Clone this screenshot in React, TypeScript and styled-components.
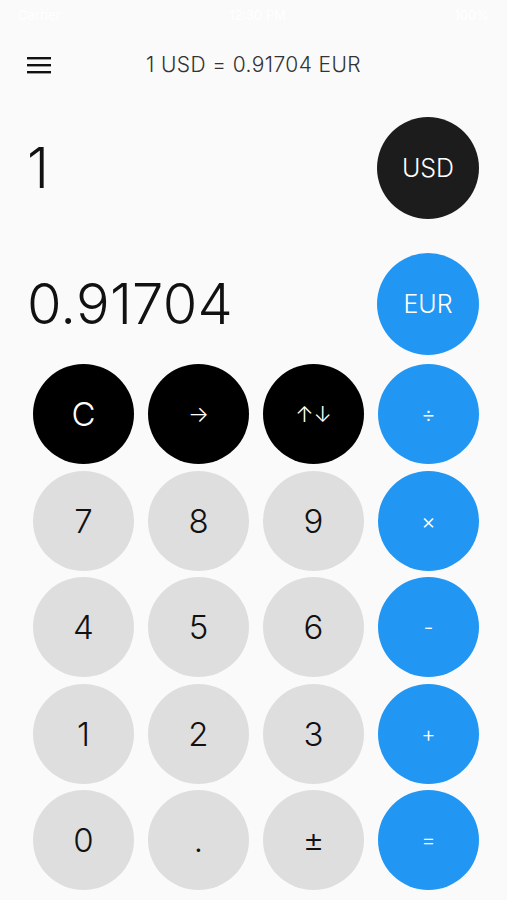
import * as React from "react";
import styled, { createGlobalStyle } from "styled-components";

const GlobalStyle = createGlobalStyle`
  html, body {
    margin: 0;
    padding: 0;
    background: #fafafa;
  }
  body {
    font-family: Inter, "Noto Sans", "Liberation Sans", sans-serif;
    color: #111;
  }
`;

type Tone = "grey" | "black" | "blue";

const keys: { label: string; tone: Tone; small?: boolean }[] = [
  { label: "C", tone: "black" },
  { label: "→", tone: "black", small: true },
  { label: "↑↓", tone: "black", small: true },
  { label: "÷", tone: "blue", small: true },
  { label: "7", tone: "grey" },
  { label: "8", tone: "grey" },
  { label: "9", tone: "grey" },
  { label: "×", tone: "blue", small: true },
  { label: "4", tone: "grey" },
  { label: "5", tone: "grey" },
  { label: "6", tone: "grey" },
  { label: "-", tone: "blue", small: true },
  { label: "1", tone: "grey" },
  { label: "2", tone: "grey" },
  { label: "3", tone: "grey" },
  { label: "+", tone: "blue", small: true },
  { label: "0", tone: "grey" },
  { label: ".", tone: "grey" },
  { label: "±", tone: "grey" },
  { label: "=", tone: "blue", small: true },
];

const MenuIcon = () => (
  <svg width="24" height="18" viewBox="0 0 24 18">
    <rect x="0" y="1" width="24" height="2.4" fill="#111" />
    <rect x="0" y="8" width="24" height="2.4" fill="#111" />
    <rect x="0" y="15" width="24" height="2.4" fill="#111" />
  </svg>
);

const App = () => {
  return (
    <>
      <GlobalStyle />
      <Screen>
        <StatusBar>
          <span>Carrier</span>
          <span>12:30 PM</span>
          <span>100%</span>
        </StatusBar>
        <Header>
          <MenuButton>
            <MenuIcon />
          </MenuButton>
          <Rate>1 USD = 0.91704 EUR</Rate>
          <span />
        </Header>
        <Display>
          <Amount>1</Amount>
          <Currency tone="black">USD</Currency>
        </Display>
        <Display>
          <Amount>0.91704</Amount>
          <Currency tone="blue">EUR</Currency>
        </Display>
        <Keypad>
          {keys.map((k) => (
            <Key key={k.label} tone={k.tone} $small={k.small}>
              {k.label}
            </Key>
          ))}
        </Keypad>
      </Screen>
    </>
  );
};

export default App;

const Screen = styled.div`
  width: 507px;
  height: 900px;
  overflow: hidden;
  display: flex;
  flex-direction: column;
`;

const StatusBar = styled.div`
  height: 30px;
  display: flex;
  justify-content: space-between;
  align-items: center;
  padding: 0 18px;
  color: #ffffff;
  font-size: 13px;
`;

const Header = styled.div`
  height: 70px;
  display: grid;
  grid-template-columns: 1fr auto 1fr;
  align-items: center;
  padding-left: 27px;
  padding-right: 27px;
`;

const MenuButton = styled.div`
  display: flex;
  align-items: center;
  margin-top: -1px;
`;

const Rate = styled.div`
  font-size: 21px;
  font-weight: 300;
  letter-spacing: 0.4px;
  color: #333;
  margin-top: -1px;
`;

const Display = styled.div`
  display: flex;
  align-items: center;
  justify-content: space-between;
  padding: 0 28px 0 27px;
  height: 136px;
`;

const Amount = styled.div`
  font-size: 56px;
  font-weight: 300;
  color: #111;
  letter-spacing: 0.2px;
`;

const toneBg: Record<Tone, string> = {
  grey: "#dedede",
  black: "#000000",
  blue: "#2196f3",
};

const Currency = styled.div<{ tone: Tone }>`
  width: 102px;
  height: 102px;
  border-radius: 50%;
  background: ${(p) => (p.tone === "black" ? "#1c1c1c" : toneBg[p.tone])};
  color: #fff;
  display: flex;
  align-items: center;
  justify-content: center;
  font-size: 25px;
  font-weight: 300;
`;

const Keypad = styled.div`
  display: grid;
  grid-template-columns: repeat(4, 101px);
  grid-auto-rows: 100px;
  column-gap: 14px;
  row-gap: 6.5px;
  padding-left: 33px;
  margin-top: -8px;
`;

const Key = styled.div<{ tone: Tone; $small?: boolean }>`
  border-radius: 50%;
  background: ${(p) => toneBg[p.tone]};
  color: ${(p) => (p.tone === "grey" ? "#111" : "#fff")};
  display: flex;
  align-items: center;
  justify-content: center;
  font-size: ${(p) => (p.$small ? "22px" : "33px")};
  font-weight: 300;
`;
